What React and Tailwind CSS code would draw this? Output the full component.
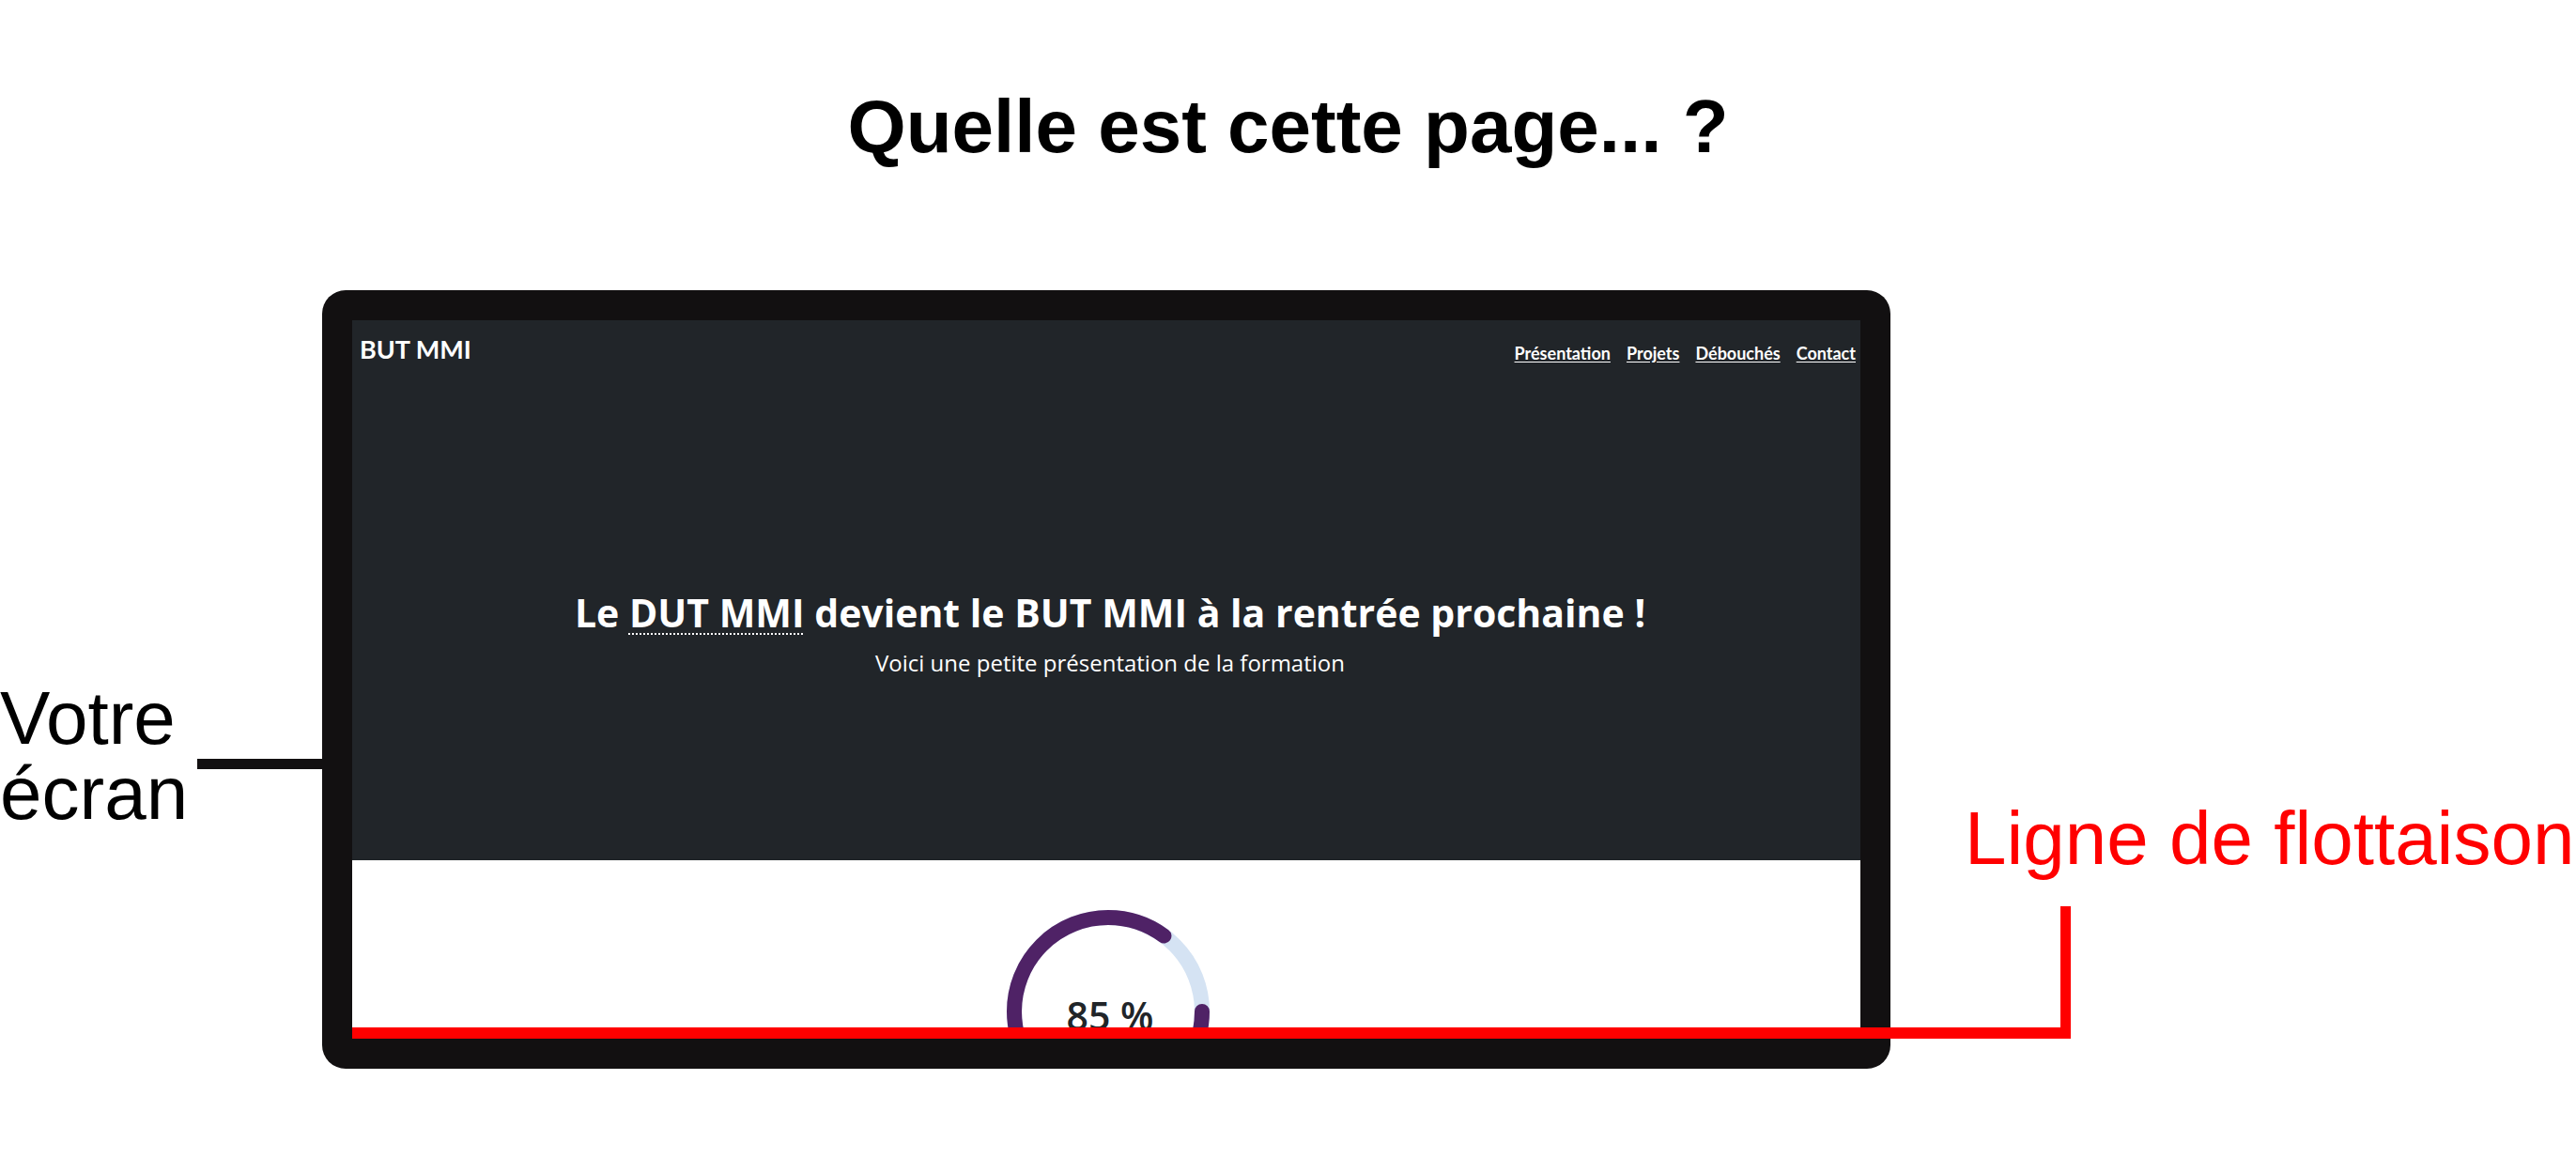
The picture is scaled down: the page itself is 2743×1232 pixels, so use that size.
export default function App() {
  const r = 100;
  const c = 2 * Math.PI * r;
  return (
    <div className="relative w-[2743px] h-[1232px] bg-white overflow-hidden">
      <h1 className="pt-[95px] text-center font-['Liberation_Sans',Arial,sans-serif] font-bold text-[80px] leading-[80px] text-black">
        Quelle est cette page... ?
      </h1>

      <div className="mt-[134px] ml-[343px] w-[1670px] h-[829px] rounded-[25px] bg-[#121011] p-[32px]">
        <div className="w-full h-full flex flex-col overflow-hidden bg-white font-['Lato','Open_Sans',sans-serif]">
          <div className="h-[575px] shrink-0 bg-[#212529] flex flex-col">
            <nav className="flex items-start justify-between pt-[17px] pl-[8px] pr-[5px]">
              <span className="text-white font-bold text-[27px] leading-none">BUT MMI</span>
              <ul className="flex gap-[17px] mt-[9px] text-[18px] leading-none font-bold text-white">
                <li><a className="underline underline-offset-2">Présentation</a></li>
                <li><a className="underline underline-offset-2">Projets</a></li>
                <li><a className="underline underline-offset-2">Débouchés</a></li>
                <li><a className="underline underline-offset-2">Contact</a></li>
              </ul>
            </nav>
            <div className="mt-[247px] pl-[8px] flex flex-col items-center text-white font-['Open_Sans','Lato',sans-serif]">
              <h2 className="text-[41px] leading-none font-bold">
                Le <abbr className="underline decoration-dotted decoration-2 underline-offset-[6px]">DUT MMI</abbr> devient le BUT MMI à la rentrée prochaine !
              </h2>
              <p className="mt-[21px] text-[24px] leading-none">Voici une petite présentation de la formation</p>
            </div>
          </div>
          <div className="shrink-0 flex justify-center pt-[53px] pl-[4px]">
            <svg width="216" height="216" viewBox="0 0 216 216" className="shrink-0">
              <circle cx="108" cy="108" r={r} fill="none" stroke="#d5e3f3" strokeWidth="16" />
              <circle
                cx="108"
                cy="108"
                r={r}
                fill="none"
                stroke="#4f2266"
                strokeWidth="16"
                strokeLinecap="round"
                strokeDasharray={`${c * 0.85} ${c}`}
              />
              <text x="110" y="128" textAnchor="middle" fontFamily="'Open Sans', Lato, sans-serif" fontWeight="600" fontSize="41" fill="#212529">
                85 %
              </text>
            </svg>
          </div>
        </div>
      </div>

      <div className="absolute left-0 top-[725px] font-['Liberation_Sans',Arial,sans-serif] text-[80px] leading-[80px] text-black">
        <div>Votre</div>
        <div>écran</div>
      </div>
      <div className="absolute left-[210px] top-[808px] w-[133px] h-[11px] bg-[#121011]" />

      <div className="absolute left-[2092px] top-[853px] font-['Liberation_Sans',Arial,sans-serif] text-[80px] leading-[80px] text-[#ff0000] whitespace-nowrap">
        Ligne de flottaison
      </div>
      <div className="absolute left-[375px] top-[1094px] w-[1830px] h-[12px] bg-[#ff0000]" />
      <div className="absolute left-[2194px] top-[965px] w-[11px] h-[141px] bg-[#ff0000]" />
    </div>
  );
}
